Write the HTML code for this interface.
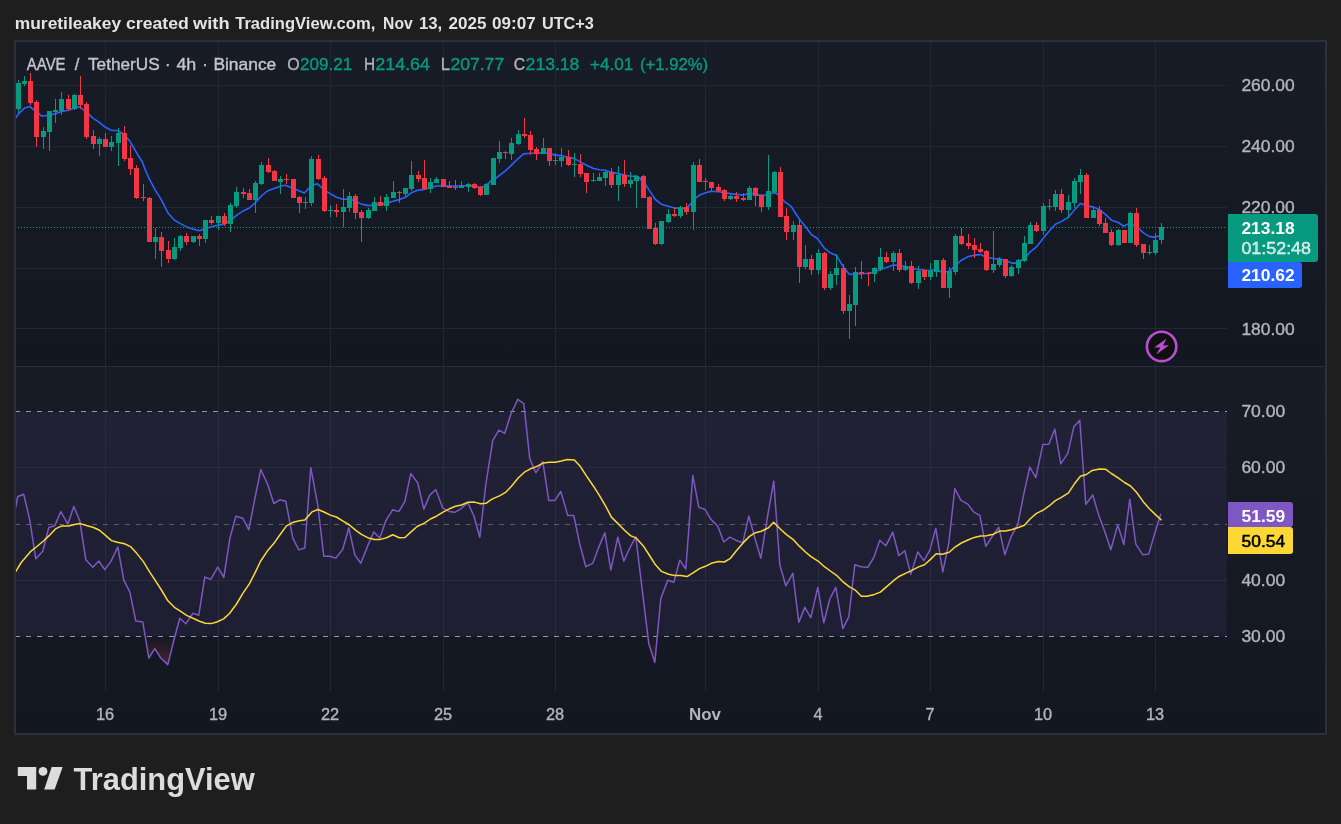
<!DOCTYPE html>
<html><head><meta charset="utf-8"><title>AAVE / TetherUS chart</title>
<style>html,body{margin:0;padding:0;background:#1e1e1e;}body{width:1341px;height:824px;overflow:hidden;position:relative;font-family:"Liberation Sans", sans-serif}</style>
</head><body>
<div style="position:absolute;left:0;top:0;width:1341px;height:824px;will-change:transform">
<svg width="1341" height="824" viewBox="0 0 1341 824" style="position:absolute;left:0;top:0;font-family:Liberation Sans,sans-serif">
<defs>
<linearGradient id="bg" x1="0" y1="0" x2="0" y2="1"><stop offset="0" stop-color="#181c27"/><stop offset="1" stop-color="#131722"/></linearGradient>
<linearGradient id="ob" gradientUnits="userSpaceOnUse" x1="0" y1="383" x2="0" y2="411.5"><stop offset="0" stop-color="#4caf50" stop-opacity="0.25"/><stop offset="1" stop-color="#4caf50" stop-opacity="0"/></linearGradient>
<linearGradient id="os" gradientUnits="userSpaceOnUse" x1="0" y1="636.5" x2="0" y2="692"><stop offset="0" stop-color="#ff5252" stop-opacity="0"/><stop offset="1" stop-color="#ff5252" stop-opacity="0.4"/></linearGradient>
<clipPath id="cp"><rect x="16" y="42" width="1211" height="324"/></clipPath>
<clipPath id="cr"><rect x="16" y="367" width="1211" height="325"/></clipPath>
<clipPath id="cob"><rect x="16" y="367" width="1211" height="44.5"/></clipPath>
<clipPath id="cos"><rect x="16" y="636.5" width="1211" height="55.5"/></clipPath>
</defs>
<rect x="14" y="40" width="1313" height="695" fill="#2d3039"/>
<rect x="16" y="42" width="1309" height="324" fill="url(#bg)"/>
<rect x="16" y="366" width="1309" height="367" fill="url(#bg)"/>
<rect x="16" y="366" width="1309" height="1" fill="#2a2e39"/>
<path d="M105.5 42V366M105.5 367V692M218.5 42V366M218.5 367V692M330.5 42V366M330.5 367V692M443.5 42V366M443.5 367V692M555.5 42V366M555.5 367V692M705.5 42V366M705.5 367V692M818.5 42V366M818.5 367V692M930.5 42V366M930.5 367V692M1043.5 42V366M1043.5 367V692M1155.5 42V366M1155.5 367V692M16 85.5H1227M16 146.5H1227M16 207.5H1227M16 268.5H1227M16 328.5H1227M16 467.5H1227M16 580.5H1227" stroke="#232733" stroke-width="1" fill="none" shape-rendering="crispEdges"/>
<rect x="16" y="411.5" width="1211" height="225.0" fill="#7e57c2" fill-opacity="0.1"/>
<path d="M16 411.5H1227M16 636.5H1227" stroke="#94979f" stroke-width="1" stroke-dasharray="5 6" stroke-dashoffset="1" fill="none" shape-rendering="crispEdges"/>
<path d="M16 524.5H1227" stroke="#5b5e6a" stroke-width="1" stroke-dasharray="5 6" stroke-dashoffset="1" fill="none" shape-rendering="crispEdges"/>
<path clip-path="url(#cp)" d="M15.2 118.5L18.6 113.8L24.5 108.1L29.8 106.5L36.5 111.8L41.3 115.9L46.0 115.6L49.6 115.1L55.5 113.8L61.5 111.5L68.5 110.2L74.4 108.1L78.9 106.7L83.1 109.7L86.5 111.2L90.2 115.7L93.7 118.7L99.7 122.6L105.4 127.3L111.4 130.2L118.0 130.7L124.5 134.8L130.5 142.1L137.4 154.2L142.5 162.2L145.3 170.0L148.9 178.1L155.0 189.7L161.5 200.1L168.2 213.3L174.5 220.2L180.5 223.6L186.5 226.9L193.0 229.1L199.5 230.7L205.5 228.6L211.5 226.8L218.6 224.9L224.5 224.2L230.5 220.3L236.5 215.3L243.5 210.7L249.5 208.0L255.4 202.7L261.4 196.0L267.3 191.0L274.1 188.6L280.5 186.3L285.5 185.2L293.5 188.6L299.5 190.9L304.4 193.0L311.5 185.6L317.5 183.8L324.5 190.1L330.5 193.9L336.5 197.3L342.6 199.3L349.5 199.1L355.4 201.1L361.5 204.1L368.4 205.6L374.5 204.7L380.5 204.1L386.5 203.5L393.5 201.1L399.5 199.6L405.4 197.3L411.5 192.7L416.9 190.4L424.5 189.4L430.5 187.6L436.5 186.0L443.5 185.8L449.5 186.0L455.4 186.0L461.5 185.8L468.5 185.8L474.5 186.4L480.5 187.3L486.5 185.8L491.4 180.4L496.1 178.0L499.5 175.4L505.4 170.9L511.5 165.1L518.4 158.3L523.6 153.9L530.5 153.2L536.5 153.0L543.5 152.7L549.5 153.6L555.4 155.1L561.5 155.6L565.0 156.6L568.5 157.3L574.5 158.6L580.5 161.9L586.5 165.3L593.5 168.5L599.5 169.7L605.4 170.3L611.5 172.4L618.5 173.6L624.5 175.1L630.5 176.2L636.5 176.0L640.2 178.6L646.1 185.2L649.5 190.6L655.4 199.5L661.5 204.3L668.4 206.3L674.5 208.1L680.5 208.1L686.5 208.1L689.7 204.9L693.5 201.3L696.2 197.7L699.5 195.3L705.4 192.7L711.5 191.4L715.0 191.5L718.5 191.6L724.5 192.7L730.5 193.6L736.5 194.4L743.5 195.1L749.5 193.0L755.4 194.1L761.5 195.6L768.5 194.7L774.5 192.0L780.5 196.5L784.2 201.3L791.4 206.7L796.5 214.7L799.5 219.2L805.4 226.6L811.5 234.7L817.4 238.5L824.1 247.8L830.5 253.1L836.5 255.6L843.5 267.2L849.5 274.4L855.4 274.0L861.4 273.7L868.4 273.2L874.6 272.0L880.5 269.5L886.5 267.5L893.5 265.0L899.5 265.4L905.4 266.5L911.4 268.3L918.4 269.5L924.6 270.2L930.5 270.5L936.5 269.5L940.2 271.4L943.5 272.5L949.5 271.0L955.4 265.7L961.4 260.2L968.4 256.5L974.8 255.1L980.5 254.6L985.7 256.9L993.5 258.7L999.5 258.7L1005.4 260.5L1011.6 263.1L1015.3 263.1L1018.4 261.3L1024.6 258.7L1030.5 251.6L1036.5 246.8L1043.5 238.1L1049.5 230.7L1055.4 224.3L1061.6 221.4L1068.4 217.2L1074.6 209.8L1080.5 203.4L1086.5 205.6L1093.5 207.1L1099.5 209.8L1105.4 214.3L1111.6 220.2L1118.4 222.5L1123.5 226.2L1127.2 224.4L1130.5 224.0L1136.5 226.5L1143.5 232.9L1149.5 236.6L1155.4 237.1L1158.6 235.9" stroke="#2962ff" stroke-width="1.6" fill="none" stroke-linejoin="round" stroke-linecap="round"/>
<g clip-path="url(#cp)" shape-rendering="crispEdges">
<path d="M18 80h1V113h-1ZM24 76h1V86h-1ZM43 127h1V149h-1ZM49 111h1V151h-1ZM55 99h1V123h-1ZM61 92h1V115h-1ZM74 94h1V110h-1ZM99 137h1V156h-1ZM111 136h1V151h-1ZM118 128h1V166h-1ZM155 228h1V259h-1ZM174 238h1V260h-1ZM180 235h1V251h-1ZM193 236h1V243h-1ZM205 220h1V243h-1ZM218 216h1V230h-1ZM230 203h1V232h-1ZM236 187h1V208h-1ZM255 181h1V213h-1ZM261 162h1V185h-1ZM280 176h1V194h-1ZM305 197h1V209h-1ZM311 156h1V206h-1ZM330 205h1V217h-1ZM343 189h1V227h-1ZM349 192h1V212h-1ZM368 208h1V219h-1ZM374 197h1V211h-1ZM386 194h1V211h-1ZM393 181h1V198h-1ZM405 188h1V197h-1ZM411 161h1V191h-1ZM430 178h1V193h-1ZM436 177h1V183h-1ZM461 181h1V188h-1ZM468 183h1V192h-1ZM486 183h1V195h-1ZM493 158h1V185h-1ZM499 141h1V163h-1ZM511 138h1V160h-1ZM518 130h1V145h-1ZM543 138h1V154h-1ZM555 153h1V165h-1ZM561 148h1V167h-1ZM574 153h1V177h-1ZM593 173h1V182h-1ZM599 173h1V181h-1ZM605 171h1V186h-1ZM618 166h1V201h-1ZM630 172h1V188h-1ZM636 175h1V208h-1ZM661 221h1V245h-1ZM668 209h1V223h-1ZM680 206h1V218h-1ZM693 162h1V230h-1ZM730 195h1V200h-1ZM749 186h1V200h-1ZM768 155h1V210h-1ZM774 171h1V194h-1ZM793 221h1V240h-1ZM805 245h1V269h-1ZM818 249h1V274h-1ZM830 271h1V290h-1ZM836 254h1V285h-1ZM849 295h1V339h-1ZM855 267h1V326h-1ZM874 267h1V282h-1ZM880 248h1V271h-1ZM893 251h1V271h-1ZM905 261h1V271h-1ZM918 266h1V289h-1ZM930 263h1V280h-1ZM936 260h1V277h-1ZM949 267h1V298h-1ZM955 234h1V275h-1ZM993 231h1V273h-1ZM999 257h1V267h-1ZM1011 265h1V277h-1ZM1018 259h1V274h-1ZM1024 236h1V262h-1ZM1030 222h1V244h-1ZM1043 203h1V235h-1ZM1049 199h1V210h-1ZM1055 190h1V211h-1ZM1068 195h1V218h-1ZM1074 178h1V208h-1ZM1080 169h1V194h-1ZM1093 207h1V218h-1ZM1118 229h1V246h-1ZM1130 212h1V243h-1ZM1149 245h1V255h-1ZM1155 233h1V255h-1ZM1161 223h1V244h-1ZM16 83h5V109h-5ZM22 81h5V84h-5ZM41 131h5V137h-5ZM47 111h5V132h-5ZM53 110h5V112h-5ZM59 99h5V111h-5ZM72 95h5V109h-5ZM97 139h5V144h-5ZM109 142h5V147h-5ZM116 133h5V143h-5ZM153 237h5V242h-5ZM172 247h5V259h-5ZM178 236h5V248h-5ZM191 236h5V242h-5ZM203 220h5V239h-5ZM216 216h5V223h-5ZM228 205h5V224h-5ZM234 192h5V206h-5ZM253 183h5V200h-5ZM259 165h5V184h-5ZM278 179h5V182h-5ZM303 202h5V203h-5ZM309 159h5V203h-5ZM328 210h5V211h-5ZM341 207h5V212h-5ZM347 196h5V208h-5ZM366 210h5V218h-5ZM372 202h5V211h-5ZM384 197h5V206h-5ZM391 192h5V198h-5ZM403 188h5V194h-5ZM409 175h5V189h-5ZM428 182h5V189h-5ZM434 179h5V183h-5ZM459 186h5V188h-5ZM466 184h5V187h-5ZM484 184h5V195h-5ZM491 158h5V185h-5ZM497 152h5V159h-5ZM509 143h5V154h-5ZM516 134h5V144h-5ZM541 148h5V154h-5ZM553 160h5V161h-5ZM559 157h5V161h-5ZM572 164h5V165h-5ZM591 180h5V181h-5ZM597 177h5V181h-5ZM603 172h5V178h-5ZM616 175h5V185h-5ZM628 180h5V184h-5ZM634 176h5V181h-5ZM659 221h5V244h-5ZM666 214h5V222h-5ZM678 207h5V216h-5ZM691 165h5V212h-5ZM728 196h5V199h-5ZM747 188h5V200h-5ZM766 191h5V207h-5ZM772 172h5V192h-5ZM791 225h5V232h-5ZM803 259h5V267h-5ZM816 253h5V270h-5ZM828 274h5V288h-5ZM834 268h5V275h-5ZM847 304h5V311h-5ZM853 272h5V305h-5ZM872 268h5V274h-5ZM878 257h5V269h-5ZM891 253h5V262h-5ZM903 266h5V270h-5ZM916 271h5V283h-5ZM928 271h5V277h-5ZM934 260h5V272h-5ZM947 271h5V288h-5ZM953 236h5V272h-5ZM991 264h5V270h-5ZM997 259h5V265h-5ZM1009 267h5V276h-5ZM1016 260h5V268h-5ZM1022 243h5V261h-5ZM1028 225h5V244h-5ZM1041 206h5V231h-5ZM1047 206h5V207h-5ZM1053 194h5V207h-5ZM1066 202h5V210h-5ZM1072 181h5V203h-5ZM1078 175h5V182h-5ZM1091 210h5V218h-5ZM1116 230h5V245h-5ZM1128 213h5V243h-5ZM1147 252h5V253h-5ZM1153 240h5V253h-5ZM1159 227h5V240h-5Z" fill="#089981"/>
<path d="M30 73h1V105h-1ZM36 100h1V147h-1ZM68 95h1V111h-1ZM80 76h1V109h-1ZM86 102h1V139h-1ZM93 130h1V149h-1ZM105 133h1V147h-1ZM124 126h1V161h-1ZM130 145h1V175h-1ZM136 165h1V199h-1ZM143 184h1V201h-1ZM149 197h1V242h-1ZM161 232h1V267h-1ZM168 241h1V263h-1ZM186 233h1V245h-1ZM199 234h1V246h-1ZM211 216h1V225h-1ZM224 213h1V226h-1ZM243 188h1V198h-1ZM249 189h1V200h-1ZM268 158h1V173h-1ZM274 170h1V181h-1ZM286 174h1V184h-1ZM293 179h1V198h-1ZM299 196h1V213h-1ZM318 155h1V180h-1ZM324 176h1V212h-1ZM336 204h1V217h-1ZM355 194h1V219h-1ZM361 210h1V242h-1ZM380 196h1V206h-1ZM399 191h1V203h-1ZM418 171h1V182h-1ZM424 160h1V190h-1ZM443 179h1V187h-1ZM449 181h1V188h-1ZM455 180h1V190h-1ZM474 183h1V189h-1ZM480 186h1V196h-1ZM505 151h1V159h-1ZM524 118h1V138h-1ZM530 131h1V155h-1ZM536 147h1V160h-1ZM549 148h1V166h-1ZM568 150h1V166h-1ZM580 154h1V177h-1ZM586 173h1V193h-1ZM611 168h1V188h-1ZM624 160h1V187h-1ZM643 175h1V198h-1ZM649 196h1V229h-1ZM655 223h1V245h-1ZM674 207h1V217h-1ZM686 203h1V215h-1ZM699 159h1V182h-1ZM705 178h1V190h-1ZM711 182h1V191h-1ZM718 184h1V192h-1ZM724 189h1V201h-1ZM736 192h1V202h-1ZM743 193h1V201h-1ZM755 187h1V206h-1ZM761 194h1V212h-1ZM780 167h1V217h-1ZM786 208h1V240h-1ZM799 220h1V283h-1ZM811 255h1V275h-1ZM824 252h1V290h-1ZM843 264h1V314h-1ZM861 261h1V279h-1ZM868 272h1V286h-1ZM886 252h1V263h-1ZM899 249h1V272h-1ZM911 261h1V284h-1ZM924 269h1V280h-1ZM943 258h1V288h-1ZM961 228h1V245h-1ZM968 234h1V249h-1ZM974 238h1V258h-1ZM980 243h1V253h-1ZM986 250h1V271h-1ZM1005 259h1V278h-1ZM1036 222h1V232h-1ZM1061 189h1V213h-1ZM1086 173h1V218h-1ZM1099 206h1V226h-1ZM1105 218h1V233h-1ZM1111 229h1V246h-1ZM1124 230h1V243h-1ZM1136 208h1V247h-1ZM1143 244h1V259h-1ZM28 81h5V103h-5ZM34 102h5V137h-5ZM66 99h5V109h-5ZM78 95h5V105h-5ZM84 104h5V137h-5ZM91 136h5V144h-5ZM103 139h5V147h-5ZM122 133h5V159h-5ZM128 158h5V169h-5ZM134 168h5V198h-5ZM141 197h5V198h-5ZM147 198h5V242h-5ZM159 237h5V251h-5ZM166 250h5V259h-5ZM184 236h5V242h-5ZM197 236h5V239h-5ZM209 220h5V223h-5ZM222 216h5V224h-5ZM241 192h5V194h-5ZM247 193h5V200h-5ZM266 165h5V172h-5ZM272 171h5V181h-5ZM284 179h5V180h-5ZM291 179h5V198h-5ZM297 197h5V203h-5ZM316 159h5V179h-5ZM322 178h5V211h-5ZM334 210h5V212h-5ZM353 196h5V213h-5ZM359 212h5V218h-5ZM378 202h5V206h-5ZM397 192h5V193h-5ZM416 175h5V179h-5ZM422 178h5V189h-5ZM441 179h5V187h-5ZM447 186h5V188h-5ZM453 187h5V188h-5ZM472 184h5V188h-5ZM478 187h5V195h-5ZM503 152h5V153h-5ZM522 134h5V136h-5ZM528 135h5V150h-5ZM534 149h5V154h-5ZM547 148h5V161h-5ZM566 157h5V165h-5ZM578 164h5V174h-5ZM584 173h5V182h-5ZM609 172h5V185h-5ZM622 175h5V184h-5ZM641 176h5V198h-5ZM647 197h5V229h-5ZM653 228h5V244h-5ZM672 214h5V216h-5ZM684 207h5V212h-5ZM697 165h5V182h-5ZM703 181h5V182h-5ZM709 182h5V188h-5ZM716 187h5V191h-5ZM722 190h5V199h-5ZM734 196h5V199h-5ZM741 198h5V200h-5ZM753 188h5V196h-5ZM759 195h5V207h-5ZM778 172h5V217h-5ZM784 216h5V232h-5ZM797 225h5V267h-5ZM809 259h5V270h-5ZM822 253h5V288h-5ZM841 268h5V311h-5ZM859 272h5V274h-5ZM866 273h5V274h-5ZM884 257h5V262h-5ZM897 253h5V270h-5ZM909 266h5V283h-5ZM922 270h5V277h-5ZM941 260h5V288h-5ZM959 236h5V244h-5ZM966 243h5V246h-5ZM972 245h5V250h-5ZM978 249h5V252h-5ZM984 251h5V270h-5ZM1003 259h5V276h-5ZM1034 225h5V231h-5ZM1059 194h5V210h-5ZM1084 175h5V218h-5ZM1097 210h5V224h-5ZM1103 223h5V233h-5ZM1109 232h5V245h-5ZM1122 230h5V243h-5ZM1134 213h5V245h-5ZM1141 244h5V253h-5Z" fill="#f23645"/>
</g>
<path d="M16 227.5H1227" stroke="#089981" stroke-width="1" stroke-dasharray="1 2" stroke-dashoffset="1" fill="none" shape-rendering="crispEdges"/>
<path clip-path="url(#cob)" d="M10.8 531.7L17.8 496.5L23.8 494.3L29.8 520.4L35.8 558.8L42.8 551.3L48.8 527.5L54.8 525.7L60.8 511.5L67.8 524.2L73.8 506.4L79.8 520.8L85.8 559.7L92.8 567.2L98.8 561.0L104.8 569.6L110.8 561.6L117.8 547.0L123.8 580.2L129.8 591.8L135.8 621.0L142.8 622.0L148.8 658.0L154.8 648.7L160.8 658.0L167.8 664.6L173.8 640.5L179.8 618.3L185.8 623.8L192.8 613.3L198.8 615.2L204.8 577.1L210.8 579.3L217.8 567.2L223.8 577.4L229.8 538.8L235.8 516.2L242.8 518.2L248.8 529.8L254.8 498.9L260.8 469.5L267.8 484.8L273.8 503.5L279.8 499.8L285.8 501.3L292.8 538.1L298.8 549.9L304.8 548.0L310.8 467.7L317.8 505.4L323.8 556.2L329.8 556.2L335.8 558.1L342.8 549.3L348.8 527.8L354.8 554.9L360.8 563.3L367.8 545.6L373.8 531.9L379.8 538.1L385.8 520.7L392.8 509.7L398.8 511.6L404.8 501.7L410.8 473.6L417.8 483.0L423.8 509.1L429.8 495.1L435.8 489.5L442.8 508.2L448.8 511.4L454.8 512.3L460.8 508.8L467.8 502.6L473.8 515.7L479.8 537.2L485.8 484.5L492.8 440.4L498.8 430.2L504.8 433.3L510.8 414.3L517.8 399.3L523.8 403.5L529.8 458.8L535.8 472.8L542.8 461.6L548.8 500.6L554.8 500.6L560.8 491.5L567.8 515.6L573.8 515.6L579.8 544.3L585.8 566.7L592.8 563.3L598.8 547.1L604.8 532.7L610.8 570.1L617.8 537.2L623.8 561.1L629.8 548.0L635.8 536.8L642.8 594.7L648.8 643.7L654.8 662.4L660.8 598.5L667.8 580.2L673.8 582.2L679.8 560.2L685.8 569.0L692.8 475.5L698.8 507.4L704.8 509.2L710.8 519.1L717.8 526.2L723.8 542.0L729.8 537.2L735.8 540.2L742.8 542.8L748.8 516.1L754.8 537.8L760.8 558.3L767.8 514.9L773.8 481.2L779.8 564.8L785.8 585.8L792.8 573.3L798.8 622.4L804.8 607.4L810.8 617.7L817.8 587.4L823.8 622.8L829.8 599.0L835.8 587.4L842.8 628.6L848.8 616.8L854.8 564.8L860.8 566.7L867.8 567.3L873.8 557.5L879.8 540.2L885.8 545.8L892.8 532.1L898.8 555.5L904.8 550.8L910.8 574.4L917.8 551.9L923.8 560.7L929.8 550.4L935.8 528.4L942.8 571.9L948.8 543.0L954.8 488.5L960.8 500.2L967.8 504.1L973.8 512.1L979.8 515.3L985.8 546.3L992.8 535.5L998.8 527.1L1004.8 554.7L1010.8 537.4L1017.8 524.3L1023.8 494.1L1029.8 467.0L1035.8 477.6L1042.8 444.6L1048.8 444.2L1054.8 429.1L1060.8 463.8L1067.8 453.3L1073.8 426.8L1079.8 420.3L1085.8 504.4L1092.8 495.0L1098.8 515.6L1104.8 531.4L1110.8 549.8L1117.8 524.9L1123.8 544.5L1129.8 499.3L1135.8 544.2L1142.8 554.8L1148.8 553.9L1154.8 533.3L1160.8 513.7L1160.8 411.5L10.8 411.5Z" fill="url(#ob)"/>
<path clip-path="url(#cos)" d="M10.8 531.7L17.8 496.5L23.8 494.3L29.8 520.4L35.8 558.8L42.8 551.3L48.8 527.5L54.8 525.7L60.8 511.5L67.8 524.2L73.8 506.4L79.8 520.8L85.8 559.7L92.8 567.2L98.8 561.0L104.8 569.6L110.8 561.6L117.8 547.0L123.8 580.2L129.8 591.8L135.8 621.0L142.8 622.0L148.8 658.0L154.8 648.7L160.8 658.0L167.8 664.6L173.8 640.5L179.8 618.3L185.8 623.8L192.8 613.3L198.8 615.2L204.8 577.1L210.8 579.3L217.8 567.2L223.8 577.4L229.8 538.8L235.8 516.2L242.8 518.2L248.8 529.8L254.8 498.9L260.8 469.5L267.8 484.8L273.8 503.5L279.8 499.8L285.8 501.3L292.8 538.1L298.8 549.9L304.8 548.0L310.8 467.7L317.8 505.4L323.8 556.2L329.8 556.2L335.8 558.1L342.8 549.3L348.8 527.8L354.8 554.9L360.8 563.3L367.8 545.6L373.8 531.9L379.8 538.1L385.8 520.7L392.8 509.7L398.8 511.6L404.8 501.7L410.8 473.6L417.8 483.0L423.8 509.1L429.8 495.1L435.8 489.5L442.8 508.2L448.8 511.4L454.8 512.3L460.8 508.8L467.8 502.6L473.8 515.7L479.8 537.2L485.8 484.5L492.8 440.4L498.8 430.2L504.8 433.3L510.8 414.3L517.8 399.3L523.8 403.5L529.8 458.8L535.8 472.8L542.8 461.6L548.8 500.6L554.8 500.6L560.8 491.5L567.8 515.6L573.8 515.6L579.8 544.3L585.8 566.7L592.8 563.3L598.8 547.1L604.8 532.7L610.8 570.1L617.8 537.2L623.8 561.1L629.8 548.0L635.8 536.8L642.8 594.7L648.8 643.7L654.8 662.4L660.8 598.5L667.8 580.2L673.8 582.2L679.8 560.2L685.8 569.0L692.8 475.5L698.8 507.4L704.8 509.2L710.8 519.1L717.8 526.2L723.8 542.0L729.8 537.2L735.8 540.2L742.8 542.8L748.8 516.1L754.8 537.8L760.8 558.3L767.8 514.9L773.8 481.2L779.8 564.8L785.8 585.8L792.8 573.3L798.8 622.4L804.8 607.4L810.8 617.7L817.8 587.4L823.8 622.8L829.8 599.0L835.8 587.4L842.8 628.6L848.8 616.8L854.8 564.8L860.8 566.7L867.8 567.3L873.8 557.5L879.8 540.2L885.8 545.8L892.8 532.1L898.8 555.5L904.8 550.8L910.8 574.4L917.8 551.9L923.8 560.7L929.8 550.4L935.8 528.4L942.8 571.9L948.8 543.0L954.8 488.5L960.8 500.2L967.8 504.1L973.8 512.1L979.8 515.3L985.8 546.3L992.8 535.5L998.8 527.1L1004.8 554.7L1010.8 537.4L1017.8 524.3L1023.8 494.1L1029.8 467.0L1035.8 477.6L1042.8 444.6L1048.8 444.2L1054.8 429.1L1060.8 463.8L1067.8 453.3L1073.8 426.8L1079.8 420.3L1085.8 504.4L1092.8 495.0L1098.8 515.6L1104.8 531.4L1110.8 549.8L1117.8 524.9L1123.8 544.5L1129.8 499.3L1135.8 544.2L1142.8 554.8L1148.8 553.9L1154.8 533.3L1160.8 513.7L1160.8 636.5L10.8 636.5Z" fill="url(#os)"/>
<path clip-path="url(#cr)" d="M10.8 531.7L17.8 496.5L23.8 494.3L29.8 520.4L35.8 558.8L42.8 551.3L48.8 527.5L54.8 525.7L60.8 511.5L67.8 524.2L73.8 506.4L79.8 520.8L85.8 559.7L92.8 567.2L98.8 561.0L104.8 569.6L110.8 561.6L117.8 547.0L123.8 580.2L129.8 591.8L135.8 621.0L142.8 622.0L148.8 658.0L154.8 648.7L160.8 658.0L167.8 664.6L173.8 640.5L179.8 618.3L185.8 623.8L192.8 613.3L198.8 615.2L204.8 577.1L210.8 579.3L217.8 567.2L223.8 577.4L229.8 538.8L235.8 516.2L242.8 518.2L248.8 529.8L254.8 498.9L260.8 469.5L267.8 484.8L273.8 503.5L279.8 499.8L285.8 501.3L292.8 538.1L298.8 549.9L304.8 548.0L310.8 467.7L317.8 505.4L323.8 556.2L329.8 556.2L335.8 558.1L342.8 549.3L348.8 527.8L354.8 554.9L360.8 563.3L367.8 545.6L373.8 531.9L379.8 538.1L385.8 520.7L392.8 509.7L398.8 511.6L404.8 501.7L410.8 473.6L417.8 483.0L423.8 509.1L429.8 495.1L435.8 489.5L442.8 508.2L448.8 511.4L454.8 512.3L460.8 508.8L467.8 502.6L473.8 515.7L479.8 537.2L485.8 484.5L492.8 440.4L498.8 430.2L504.8 433.3L510.8 414.3L517.8 399.3L523.8 403.5L529.8 458.8L535.8 472.8L542.8 461.6L548.8 500.6L554.8 500.6L560.8 491.5L567.8 515.6L573.8 515.6L579.8 544.3L585.8 566.7L592.8 563.3L598.8 547.1L604.8 532.7L610.8 570.1L617.8 537.2L623.8 561.1L629.8 548.0L635.8 536.8L642.8 594.7L648.8 643.7L654.8 662.4L660.8 598.5L667.8 580.2L673.8 582.2L679.8 560.2L685.8 569.0L692.8 475.5L698.8 507.4L704.8 509.2L710.8 519.1L717.8 526.2L723.8 542.0L729.8 537.2L735.8 540.2L742.8 542.8L748.8 516.1L754.8 537.8L760.8 558.3L767.8 514.9L773.8 481.2L779.8 564.8L785.8 585.8L792.8 573.3L798.8 622.4L804.8 607.4L810.8 617.7L817.8 587.4L823.8 622.8L829.8 599.0L835.8 587.4L842.8 628.6L848.8 616.8L854.8 564.8L860.8 566.7L867.8 567.3L873.8 557.5L879.8 540.2L885.8 545.8L892.8 532.1L898.8 555.5L904.8 550.8L910.8 574.4L917.8 551.9L923.8 560.7L929.8 550.4L935.8 528.4L942.8 571.9L948.8 543.0L954.8 488.5L960.8 500.2L967.8 504.1L973.8 512.1L979.8 515.3L985.8 546.3L992.8 535.5L998.8 527.1L1004.8 554.7L1010.8 537.4L1017.8 524.3L1023.8 494.1L1029.8 467.0L1035.8 477.6L1042.8 444.6L1048.8 444.2L1054.8 429.1L1060.8 463.8L1067.8 453.3L1073.8 426.8L1079.8 420.3L1085.8 504.4L1092.8 495.0L1098.8 515.6L1104.8 531.4L1110.8 549.8L1117.8 524.9L1123.8 544.5L1129.8 499.3L1135.8 544.2L1142.8 554.8L1148.8 553.9L1154.8 533.3L1160.8 513.7" stroke="#7e57c2" stroke-width="1.5" fill="none" stroke-linejoin="round"/>
<path clip-path="url(#cr)" d="M15.2 572.4L21.2 562.5L30.4 551.7L36.3 547.0L43.4 541.0L49.4 535.4L55.4 528.9L61.4 526.1L68.5 526.1L74.5 524.6L80.4 523.6L86.4 525.5L93.5 527.5L99.5 530.2L105.5 535.4L111.5 540.6L117.4 542.3L124.5 543.8L130.5 546.6L136.5 553.1L143.4 561.6L149.6 571.8L155.7 581.2L161.7 590.5L167.9 600.8L174.4 607.3L180.4 611.1L186.6 615.4L193.5 618.5L199.5 621.3L205.4 623.2L211.4 623.6L217.4 621.7L223.6 618.9L229.5 613.5L236.5 604.0L242.7 593.7L249.5 583.6L255.5 571.8L260.7 561.0L268.0 550.2L274.6 542.4L280.5 534.0L286.5 525.9L293.4 522.2L299.4 520.7L304.8 520.0L311.9 511.9L318.1 509.5L324.5 512.3L330.4 515.1L336.4 517.0L343.5 521.3L349.5 525.0L355.5 530.1L361.4 534.4L368.6 538.1L374.5 539.6L380.5 539.4L386.5 537.7L392.8 534.7L399.2 537.7L405.0 537.5L411.3 531.6L417.5 526.3L424.4 523.1L430.4 519.0L436.4 516.2L443.5 511.9L449.5 508.8L455.4 506.3L461.4 505.0L468.0 502.2L474.5 502.1L480.5 503.8L486.1 503.3L490.0 500.4L493.5 498.4L499.5 495.9L505.5 492.4L511.5 486.2L518.4 477.8L524.4 472.2L530.4 468.8L536.5 466.6L543.4 462.9L549.4 462.3L555.4 462.3L561.4 461.0L567.2 459.5L574.4 460.1L580.4 466.6L586.4 475.9L593.5 486.2L599.5 495.6L605.5 505.8L611.4 517.1L618.5 524.1L624.5 530.2L630.5 535.6L636.2 538.1L643.5 546.2L649.5 555.5L655.5 564.8L661.5 571.4L668.6 574.2L674.5 575.5L680.5 575.5L687.1 576.6L693.4 572.7L699.4 568.6L705.4 566.3L711.3 563.3L718.4 561.5L724.4 562.0L730.4 558.3L736.4 550.8L743.5 542.4L749.5 536.4L755.4 532.7L761.4 531.2L768.5 527.8L773.6 522.2L780.5 529.3L786.5 534.6L793.6 539.9L799.5 546.4L805.5 552.0L810.7 556.4L818.4 561.3L824.4 566.7L830.4 571.0L836.5 575.3L843.4 582.2L849.4 586.9L855.4 590.2L861.4 596.2L867.0 596.2L874.5 594.4L880.4 592.1L886.4 586.9L893.5 580.7L899.5 576.2L905.5 573.4L911.4 570.6L918.6 566.9L924.5 564.8L930.5 559.4L936.1 553.8L942.3 554.2L949.2 552.3L955.4 546.8L961.4 543.0L968.5 539.8L974.4 537.4L980.4 536.1L986.4 535.8L993.5 534.2L999.5 531.1L1005.5 531.1L1011.4 529.7L1018.4 527.5L1024.4 525.3L1030.5 518.5L1036.5 513.4L1040.0 511.6L1043.4 510.0L1049.4 505.7L1055.4 500.6L1061.4 497.4L1068.5 492.8L1074.4 483.8L1080.4 476.3L1086.4 474.5L1092.2 470.4L1099.5 468.9L1105.4 469.2L1111.4 473.5L1118.5 478.2L1124.5 482.5L1130.5 486.0L1136.5 492.2L1143.4 501.9L1149.4 508.7L1155.5 514.6L1161.5 520.2" stroke="#fdd835" stroke-width="1.5" fill="none" stroke-linejoin="round"/>
<circle cx="1161.6" cy="346.4" r="16.6" fill="#131722"/>
<circle cx="1161.6" cy="346.4" r="14.7" fill="#0f0f0f" stroke="#b84fd0" stroke-width="2.6"/>
<path d="M1166.6 338.4L1154.2 347.5L1160.3 347.4L1156.3 354.5L1169.1 345.2L1163 345.4Z" fill="#b84fd0"/>
<text x="14.799999999999999" y="29" font-size="16.5" fill="#e3e3e3" font-weight="bold" textLength="106.3" lengthAdjust="spacingAndGlyphs">muretileakey</text>
<text x="126.0" y="29" font-size="16.5" fill="#e3e3e3" font-weight="bold" textLength="62.7" lengthAdjust="spacingAndGlyphs">created</text>
<text x="193.1" y="29" font-size="16.5" fill="#e3e3e3" font-weight="bold" textLength="36.5" lengthAdjust="spacingAndGlyphs">with</text>
<text x="235.2" y="29" font-size="16.5" fill="#e3e3e3" font-weight="bold" textLength="140.1" lengthAdjust="spacingAndGlyphs">TradingView.com,</text>
<text x="383.09999999999997" y="29" font-size="16.5" fill="#e3e3e3" font-weight="bold" textLength="29.6" lengthAdjust="spacingAndGlyphs">Nov</text>
<text x="418.9" y="29" font-size="16.5" fill="#e3e3e3" font-weight="bold" textLength="23.3" lengthAdjust="spacingAndGlyphs">13,</text>
<text x="448.59999999999997" y="29" font-size="16.5" fill="#e3e3e3" font-weight="bold" textLength="37.9" lengthAdjust="spacingAndGlyphs">2025</text>
<text x="492.0" y="29" font-size="16.5" fill="#e3e3e3" font-weight="bold" textLength="43.7" lengthAdjust="spacingAndGlyphs">09:07</text>
<text x="541.9000000000001" y="29" font-size="16.5" fill="#e3e3e3" font-weight="bold" textLength="52.0" lengthAdjust="spacingAndGlyphs">UTC+3</text>
<text x="26.799999999999997" y="69.5" font-size="16.5" fill="#c3c6ce" font-weight="normal" textLength="38.8" lengthAdjust="spacingAndGlyphs" stroke="#c3c6ce" stroke-width="0.35">AAVE</text>
<text x="77.1" y="69.5" font-size="16.5" fill="#c3c6ce" text-anchor="middle" stroke="#c3c6ce" stroke-width="0.35">/</text>
<text x="88.0" y="69.5" font-size="16.5" fill="#c3c6ce" font-weight="normal" textLength="71.6" lengthAdjust="spacingAndGlyphs" stroke="#c3c6ce" stroke-width="0.35">TetherUS</text>
<text x="167.7" y="69.5" font-size="16.5" fill="#c3c6ce" text-anchor="middle" stroke="#c3c6ce" stroke-width="0.35">·</text>
<text x="176.4" y="69.5" font-size="16.5" fill="#c3c6ce" font-weight="normal" textLength="19.9" lengthAdjust="spacingAndGlyphs" stroke="#c3c6ce" stroke-width="0.35">4h</text>
<text x="205.0" y="69.5" font-size="16.5" fill="#c3c6ce" text-anchor="middle" stroke="#c3c6ce" stroke-width="0.35">·</text>
<text x="213.4" y="69.5" font-size="16.5" fill="#c3c6ce" font-weight="normal" textLength="62.9" lengthAdjust="spacingAndGlyphs" stroke="#c3c6ce" stroke-width="0.35">Binance</text>
<text x="287.2" y="69.5" font-size="16.5" fill="#b2b5be" font-weight="normal" textLength="12.4" lengthAdjust="spacingAndGlyphs" stroke="#b2b5be" stroke-width="0.35">O</text>
<text x="300.09999999999997" y="69.5" font-size="16.5" fill="#089981" font-weight="normal" textLength="52.2" lengthAdjust="spacingAndGlyphs" stroke="#089981" stroke-width="0.35">209.21</text>
<text x="364.0" y="69.5" font-size="16.5" fill="#b2b5be" font-weight="normal" textLength="11.1" lengthAdjust="spacingAndGlyphs" stroke="#b2b5be" stroke-width="0.35">H</text>
<text x="375.2" y="69.5" font-size="16.5" fill="#089981" font-weight="normal" textLength="54.9" lengthAdjust="spacingAndGlyphs" stroke="#089981" stroke-width="0.35">214.64</text>
<text x="440.7" y="69.5" font-size="16.5" fill="#b2b5be" font-weight="normal" textLength="9.4" lengthAdjust="spacingAndGlyphs" stroke="#b2b5be" stroke-width="0.35">L</text>
<text x="450.4" y="69.5" font-size="16.5" fill="#089981" font-weight="normal" textLength="53.8" lengthAdjust="spacingAndGlyphs" stroke="#089981" stroke-width="0.35">207.77</text>
<text x="513.8" y="69.5" font-size="16.5" fill="#b2b5be" font-weight="normal" textLength="11.3" lengthAdjust="spacingAndGlyphs" stroke="#b2b5be" stroke-width="0.35">C</text>
<text x="525.6" y="69.5" font-size="16.5" fill="#089981" font-weight="normal" textLength="53.8" lengthAdjust="spacingAndGlyphs" stroke="#089981" stroke-width="0.35">213.18</text>
<text x="590.0" y="69.5" font-size="16.5" fill="#089981" font-weight="normal" textLength="43.1" lengthAdjust="spacingAndGlyphs" stroke="#089981" stroke-width="0.35">+4.01</text>
<text x="639.9" y="69.5" font-size="16.5" fill="#089981" font-weight="normal" textLength="68.3" lengthAdjust="spacingAndGlyphs" stroke="#089981" stroke-width="0.35">(+1.92%)</text>
<text x="1241.4" y="90.8" font-size="16" fill="#b2b5be" font-weight="normal" textLength="53.2" lengthAdjust="spacingAndGlyphs" stroke="#b2b5be" stroke-width="0.35">260.00</text>
<text x="1241.4" y="151.8" font-size="16" fill="#b2b5be" font-weight="normal" textLength="53.2" lengthAdjust="spacingAndGlyphs" stroke="#b2b5be" stroke-width="0.35">240.00</text>
<text x="1241.4" y="212.8" font-size="16" fill="#b2b5be" font-weight="normal" textLength="53.2" lengthAdjust="spacingAndGlyphs" stroke="#b2b5be" stroke-width="0.35">220.00</text>
<text x="1241.4" y="334.8" font-size="16" fill="#b2b5be" font-weight="normal" textLength="53.2" lengthAdjust="spacingAndGlyphs" stroke="#b2b5be" stroke-width="0.35">180.00</text>
<text x="1241.4" y="416.8" font-size="16" fill="#b2b5be" font-weight="normal" textLength="43.8" lengthAdjust="spacingAndGlyphs" stroke="#b2b5be" stroke-width="0.35">70.00</text>
<text x="1241.4" y="473.05" font-size="16" fill="#b2b5be" font-weight="normal" textLength="43.8" lengthAdjust="spacingAndGlyphs" stroke="#b2b5be" stroke-width="0.35">60.00</text>
<text x="1241.4" y="585.55" font-size="16" fill="#b2b5be" font-weight="normal" textLength="43.8" lengthAdjust="spacingAndGlyphs" stroke="#b2b5be" stroke-width="0.35">40.00</text>
<text x="1241.4" y="641.8" font-size="16" fill="#b2b5be" font-weight="normal" textLength="43.8" lengthAdjust="spacingAndGlyphs" stroke="#b2b5be" stroke-width="0.35">30.00</text>
<text x="95.9" y="719.7" font-size="16" fill="#b2b5be" font-weight="normal" textLength="18.2" lengthAdjust="spacingAndGlyphs" stroke="#b2b5be" stroke-width="0.35">16</text>
<text x="208.9" y="719.7" font-size="16" fill="#b2b5be" font-weight="normal" textLength="18.2" lengthAdjust="spacingAndGlyphs" stroke="#b2b5be" stroke-width="0.35">19</text>
<text x="320.9" y="719.7" font-size="16" fill="#b2b5be" font-weight="normal" textLength="18.2" lengthAdjust="spacingAndGlyphs" stroke="#b2b5be" stroke-width="0.35">22</text>
<text x="433.9" y="719.7" font-size="16" fill="#b2b5be" font-weight="normal" textLength="18.2" lengthAdjust="spacingAndGlyphs" stroke="#b2b5be" stroke-width="0.35">25</text>
<text x="545.9" y="719.7" font-size="16" fill="#b2b5be" font-weight="normal" textLength="18.2" lengthAdjust="spacingAndGlyphs" stroke="#b2b5be" stroke-width="0.35">28</text>
<text x="689.0" y="719.7" font-size="16" fill="#b2b5be" font-weight="bold" textLength="32.0" lengthAdjust="spacingAndGlyphs">Nov</text>
<text x="813.5" y="719.7" font-size="16" fill="#b2b5be" font-weight="normal" textLength="9.0" lengthAdjust="spacingAndGlyphs" stroke="#b2b5be" stroke-width="0.35">4</text>
<text x="925.5" y="719.7" font-size="16" fill="#b2b5be" font-weight="normal" textLength="9.0" lengthAdjust="spacingAndGlyphs" stroke="#b2b5be" stroke-width="0.35">7</text>
<text x="1033.9" y="719.7" font-size="16" fill="#b2b5be" font-weight="normal" textLength="18.2" lengthAdjust="spacingAndGlyphs" stroke="#b2b5be" stroke-width="0.35">10</text>
<text x="1145.9" y="719.7" font-size="16" fill="#b2b5be" font-weight="normal" textLength="18.2" lengthAdjust="spacingAndGlyphs" stroke="#b2b5be" stroke-width="0.35">13</text>
<path d="M1228 214H1315a3 3 0 0 1 3 3V259a3 3 0 0 1 -3 3H1228Z" fill="#089981"/>
<text x="1241.4" y="233.7" font-size="16.5" fill="#ffffff" font-weight="bold" textLength="53.2" lengthAdjust="spacingAndGlyphs">213.18</text>
<text x="1241.4" y="254" font-size="16" fill="#ffffff" font-weight="normal" textLength="69.6" lengthAdjust="spacingAndGlyphs" fill-opacity="0.72" stroke="#ffffff" stroke-width="0.35">01:52:48</text>
<path d="M1228 262H1299a3 3 0 0 1 3 3V285a3 3 0 0 1 -3 3H1228Z" fill="#2962ff"/>
<text x="1241.4" y="281" font-size="16.5" fill="#ffffff" font-weight="bold" textLength="53.2" lengthAdjust="spacingAndGlyphs">210.62</text>
<path d="M1228 502H1290a3 3 0 0 1 3 3V524a3 3 0 0 1 -3 3H1228Z" fill="#7e57c2"/>
<text x="1241.6" y="521.8" font-size="17" fill="#ffffff" font-weight="bold" textLength="43.6" lengthAdjust="spacingAndGlyphs">51.59</text>
<path d="M1228 527H1290a3 3 0 0 1 3 3V551a3 3 0 0 1 -3 3H1228Z" fill="#fdd835"/>
<text x="1241.6" y="546.8" font-size="17" fill="#000000" font-weight="normal" textLength="43.6" lengthAdjust="spacingAndGlyphs" stroke="#000" stroke-width="0.55">50.54</text>
<path d="M17.8 767H36.2V789.5H27V776H17.8Z" fill="#dcdcdc"/>
<circle cx="43" cy="771.4" r="4.4" fill="#dcdcdc"/>
<path d="M51.7 767H62.7L54.6 789.5H44.2Z" fill="#dcdcdc"/>
<text x="73.6" y="789.5" font-size="31.4" fill="#dcdcdc" font-weight="bold" textLength="181.1" lengthAdjust="spacingAndGlyphs">TradingView</text>
</svg>
</div>
</body></html>
